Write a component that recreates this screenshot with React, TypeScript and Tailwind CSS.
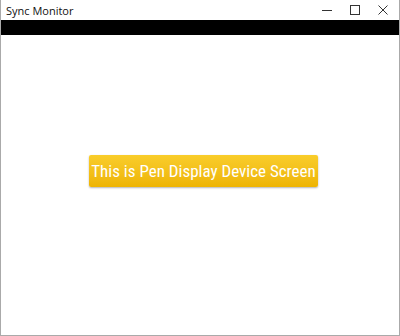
import React from "react";

export default function App() {
  return (
    <div className="w-[400px] h-[336px] bg-white flex flex-col overflow-hidden" style={{ fontFamily: "'Noto Sans', 'Open Sans', sans-serif" }}>
      <div className="flex-1 flex flex-col border-l border-r border-b border-[#aaaaaa]">
        <div className="h-[20px] flex items-center justify-between pl-[5px]">
          <span className="text-[11px] text-[#111] leading-none" style={{ fontFamily: "'Open Sans', sans-serif" }}>Sync Monitor</span>
          <div className="flex h-full">
            <div className="w-[28px] h-full flex items-center justify-center">
              <svg width="10" height="10" viewBox="0 0 10 10"><line x1="0" y1="5.5" x2="10" y2="5.5" stroke="#333" strokeWidth="1" /></svg>
            </div>
            <div className="w-[28px] h-full flex items-center justify-center">
              <svg width="10" height="10" viewBox="0 0 10 10"><rect x="0.5" y="0.5" width="9" height="9" fill="none" stroke="#333" strokeWidth="1" /></svg>
            </div>
            <div className="w-[28px] h-full flex items-center justify-center mr-[2px]">
              <svg width="10" height="10" viewBox="0 0 10 10"><path d="M0.5 0.5 L9.5 9.5 M9.5 0.5 L0.5 9.5" stroke="#333" strokeWidth="1" /></svg>
            </div>
          </div>
        </div>
        <div className="h-[15px] bg-black" />
        <div className="flex-1 flex items-center justify-center pb-[28px] pl-[7px]">
          <div
            className="w-[229px] h-[32px] flex items-center justify-center rounded-[2px] shadow-[0_1px_2px_rgba(0,0,0,0.3)] bg-gradient-to-b from-[#f9cd2a] to-[#eeb400]"
          >
            <span className="text-white text-[17px] leading-none whitespace-nowrap" style={{ fontFamily: "'Liberation Sans Narrow', 'Roboto Condensed', Roboto, sans-serif" }}>
              This is Pen Display Device Screen
            </span>
          </div>
        </div>
      </div>
    </div>
  );
}
